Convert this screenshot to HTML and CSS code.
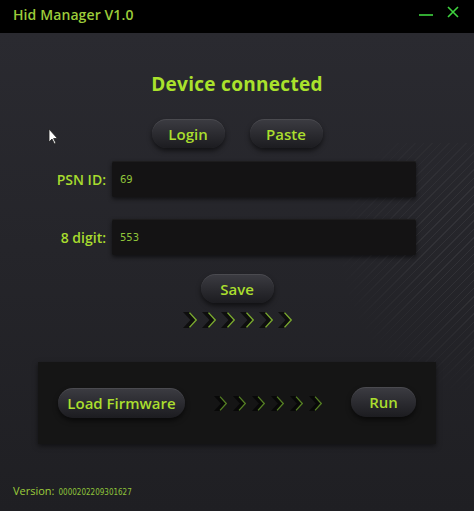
FILE: index.html
```html
<!DOCTYPE html>
<html>
<head>
<meta charset="utf-8">
<link rel="stylesheet" href="styles.css">
</head>
<body>
<div class="window">
  <div class="titlebar">
    <span class="title">Hid Manager V1.0</span>
    <div class="controls">
      <svg class="ctl" width="16" height="16" viewBox="0 0 16 16"><line x1="1" y1="11" x2="15" y2="11" stroke="#3fd43f" stroke-width="1.6"/></svg>
      <svg class="ctl" width="14" height="14" viewBox="0 0 14 14"><path d="M2 2 L12 12 M12 2 L2 12" stroke="#3fd43f" stroke-width="1.6" fill="none"/></svg>
    </div>
  </div>
  <div class="main">
    <div class="stripes"></div>
    <svg class="cursor" width="12" height="18" viewBox="0 0 12 18"><path d="M1 1 L1 14 L4 11 L6.5 16 L8 15.3 L5.6 10.5 L9.5 10.5 Z" fill="#fff" stroke="#222" stroke-width="0.8"/></svg>
    <h1 class="status">Device connected</h1>
    <div class="btn-row">
      <button class="pill w73">Login</button>
      <button class="pill w73">Paste</button>
    </div>
    <div class="field first">
      <label class="lbl">PSN ID:</label>
      <div class="input">69</div>
    </div>
    <div class="field second">
      <label class="lbl">8 digit:</label>
      <div class="input">553</div>
    </div>
    <button class="pill w73 save">Save</button>
    <div class="chevrons">
      <svg width="14" height="16" viewBox="0 0 14 16"><polygon points="0,0 6.5,0 14,8 6.5,16 0,16 7.5,8" fill="#0e0e0e"/><polyline points="6.5,0.6 13.2,8 6.5,15.4" fill="none" stroke="#7aa830" stroke-width="1.4"/></svg>
      <svg width="14" height="16" viewBox="0 0 14 16"><polygon points="0,0 6.5,0 14,8 6.5,16 0,16 7.5,8" fill="#0e0e0e"/><polyline points="6.5,0.6 13.2,8 6.5,15.4" fill="none" stroke="#7aa830" stroke-width="1.4"/></svg>
      <svg width="14" height="16" viewBox="0 0 14 16"><polygon points="0,0 6.5,0 14,8 6.5,16 0,16 7.5,8" fill="#0e0e0e"/><polyline points="6.5,0.6 13.2,8 6.5,15.4" fill="none" stroke="#7aa830" stroke-width="1.4"/></svg>
      <svg width="14" height="16" viewBox="0 0 14 16"><polygon points="0,0 6.5,0 14,8 6.5,16 0,16 7.5,8" fill="#0e0e0e"/><polyline points="6.5,0.6 13.2,8 6.5,15.4" fill="none" stroke="#7aa830" stroke-width="1.4"/></svg>
      <svg width="14" height="16" viewBox="0 0 14 16"><polygon points="0,0 6.5,0 14,8 6.5,16 0,16 7.5,8" fill="#0e0e0e"/><polyline points="6.5,0.6 13.2,8 6.5,15.4" fill="none" stroke="#7aa830" stroke-width="1.4"/></svg>
      <svg width="14" height="16" viewBox="0 0 14 16"><polygon points="0,0 6.5,0 14,8 6.5,16 0,16 7.5,8" fill="#0e0e0e"/><polyline points="6.5,0.6 13.2,8 6.5,15.4" fill="none" stroke="#7aa830" stroke-width="1.4"/></svg>
    </div>
    <div class="panel">
      <button class="pill load">Load Firmware</button>
      <div class="chevrons small">
        <svg width="13" height="15" viewBox="0 0 14 16"><polygon points="0,0 6.5,0 14,8 6.5,16 0,16 7.5,8" fill="#080808"/><polyline points="6.5,0.6 13.2,8 6.5,15.4" fill="none" stroke="#557f24" stroke-width="1.4"/></svg>
        <svg width="13" height="15" viewBox="0 0 14 16"><polygon points="0,0 6.5,0 14,8 6.5,16 0,16 7.5,8" fill="#080808"/><polyline points="6.5,0.6 13.2,8 6.5,15.4" fill="none" stroke="#557f24" stroke-width="1.4"/></svg>
        <svg width="13" height="15" viewBox="0 0 14 16"><polygon points="0,0 6.5,0 14,8 6.5,16 0,16 7.5,8" fill="#080808"/><polyline points="6.5,0.6 13.2,8 6.5,15.4" fill="none" stroke="#557f24" stroke-width="1.4"/></svg>
        <svg width="13" height="15" viewBox="0 0 14 16"><polygon points="0,0 6.5,0 14,8 6.5,16 0,16 7.5,8" fill="#080808"/><polyline points="6.5,0.6 13.2,8 6.5,15.4" fill="none" stroke="#557f24" stroke-width="1.4"/></svg>
        <svg width="13" height="15" viewBox="0 0 14 16"><polygon points="0,0 6.5,0 14,8 6.5,16 0,16 7.5,8" fill="#080808"/><polyline points="6.5,0.6 13.2,8 6.5,15.4" fill="none" stroke="#557f24" stroke-width="1.4"/></svg>
        <svg width="13" height="15" viewBox="0 0 14 16"><polygon points="0,0 6.5,0 14,8 6.5,16 0,16 7.5,8" fill="#080808"/><polyline points="6.5,0.6 13.2,8 6.5,15.4" fill="none" stroke="#557f24" stroke-width="1.4"/></svg>
      </div>
      <button class="pill run">Run</button>
    </div>
    <div class="version">
      <span class="vlabel">Version:</span>
      <span class="vvalue">0000202209301627</span>
    </div>
  </div>
</div>
</body>
</html>
```

FILE: styles.css
```css
* { box-sizing: border-box; }
html, body { margin: 0; padding: 0; }
body {
  width: 474px;
  height: 511px;
  overflow: hidden;
  background: #1f1f23;
  font-family: "Open Sans", "Liberation Sans", sans-serif;
}
.window {
  width: 474px;
  height: 511px;
  display: flex;
  flex-direction: column;
}
.titlebar {
  height: 33px;
  background: #000;
  display: flex;
  align-items: center;
  justify-content: space-between;
  padding: 0 14px 0 13px;
  flex: none;
}
.title {
  color: #9ccc3a;
  font-size: 14px;
  font-weight: 600;
  letter-spacing: 0.1px;
  margin-top: -4px;
}
.controls {
  display: flex;
  align-items: center;
  gap: 12px;
  margin-top: -10px;
}
.main {
  position: relative;
  isolation: isolate;
  flex: 1;
  display: flex;
  flex-direction: column;
  align-items: center;
  background: linear-gradient(180deg, #2a2a30 0%, #25252a 45%, #1f1f23 100%);
  overflow: hidden;
}
.stripes {
  position: absolute;
  z-index: -1;
  left: 330px;
  top: 110px;
  width: 144px;
  height: 260px;
  background: repeating-linear-gradient(135deg, rgba(255,255,255,0.06) 0 1px, transparent 1px 6px);
  -webkit-mask-image: radial-gradient(ellipse at 100% 40%, #000 20%, transparent 70%);
  mask-image: radial-gradient(ellipse at 100% 40%, #000 20%, transparent 70%);
  pointer-events: none;
}
.cursor {
  position: absolute;
  left: 48px;
  top: 95px;
}
.status {
  margin: 38px 0 0;
  height: 26px;
  line-height: 26px;
  font-size: 19px;
  font-weight: 700;
  color: #aae22c;
  letter-spacing: 0.3px;
}
.btn-row {
  display: flex;
  gap: 25px;
  margin-top: 22px;
}
.pill {
  height: 29px;
  border-radius: 15px;
  border: none;
  background: linear-gradient(180deg, #3c3c42 0%, #2a2a2f 55%, #1c1c20 100%);
  box-shadow: 0 3px 5px rgba(0,0,0,0.55), inset 0 1px 0 rgba(255,255,255,0.08);
  color: #aade2e;
  font-family: "Open Sans", "Liberation Sans", sans-serif;
  font-size: 15px;
  font-weight: 600;
  padding: 0;
  display: flex;
  align-items: center;
  justify-content: center;
}
.w73 { width: 73px; }
.field {
  display: flex;
  align-items: center;
  width: 474px;
}
.field.first { margin-top: 13px; }
.field.second { margin-top: 22px; }
.lbl {
  width: 106px;
  text-align: right;
  color: #a8dc2e;
  font-size: 14px;
  font-weight: 600;
}
.input {
  margin-left: 6px;
  width: 304px;
  height: 36px;
  background: #141314;
  border-radius: 2px;
  box-shadow: 0 2px 4px rgba(0,0,0,0.6), inset 0 1px 0 rgba(255,255,255,0.04);
  color: #8fc43a;
  font-family: "DejaVu Sans", sans-serif;
  font-size: 10px;
  padding: 13px 0 0 8px;
}
.save { margin-top: 19px; }
.chevrons {
  display: flex;
  gap: 5px;
  margin-top: 9px;
  height: 16px;
}
.chevrons.small { gap: 6px; margin: 0; height: 15px; }
.panel {
  margin-top: 34px;
  width: 398px;
  height: 82px;
  background: #151515;
  box-shadow: 0 2px 5px rgba(0,0,0,0.5);
  display: flex;
  align-items: center;
  padding: 0 20px;
}
.load {
  width: 127px;
  height: 30px;
  margin-right: 29px;
}
.run {
  width: 65px;
  height: 30px;
  margin-left: auto;
  margin-top: -2px;
}
.version {
  align-self: flex-start;
  margin: 39px 0 0 13px;
  display: flex;
  align-items: baseline;
  gap: 4px;
}
.vlabel {
  color: #9ccc3a;
  font-size: 11px;
  font-weight: 500;
}
.vvalue {
  color: #8fc43a;
  font-family: "Liberation Sans Narrow", "DejaVu Sans Condensed", sans-serif;
  font-size: 8px;
}
```
